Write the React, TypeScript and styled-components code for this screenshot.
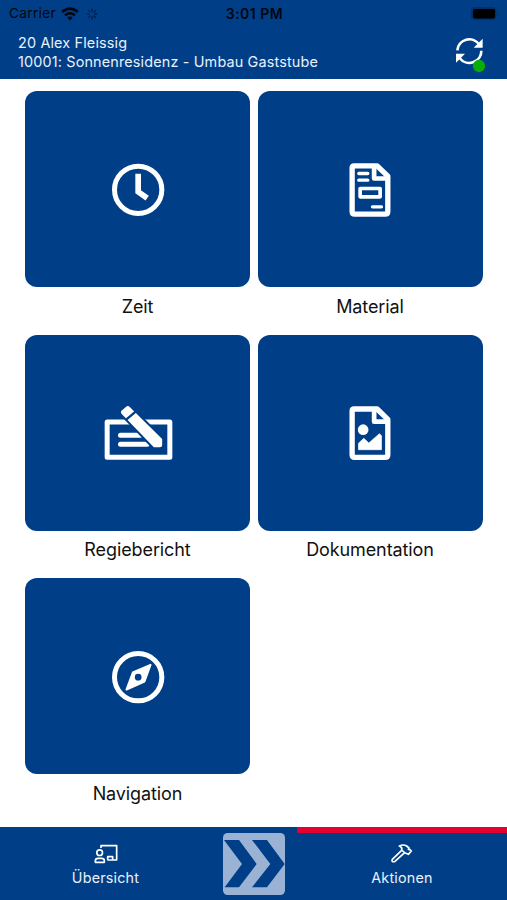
import React from "react";
import styled, { createGlobalStyle } from "styled-components";

const BLUE = "#003f88";

const GlobalStyle = createGlobalStyle`
  *, *::before, *::after { box-sizing: border-box; }
  body { margin: 0; background: #fff; }
`;

const Screen = styled.div`
  width: 507px;
  height: 900px;
  display: flex;
  flex-direction: column;
  background: #fff;
  font-family: Inter, "Liberation Sans", sans-serif;
  overflow: hidden;
`;

const Header = styled.header`
  height: 79px;
  flex: none;
  background: ${BLUE};
`;

const StatusBar = styled.div`
  height: 27px;
  padding: 0 7px 0 9px;
  display: grid;
  grid-template-columns: 1fr auto 1fr;
  align-items: center;
  color: #00060f;
`;

const Carrier = styled.div`
  display: flex;
  align-items: center;
  font-size: 13.7px;
  line-height: 27px;
  letter-spacing: 0.3px;
  svg { display: block; }
`;

const WifiIcon = styled.svg`
  margin-left: 5.5px;
`;

const SpinnerIcon = styled.svg`
  margin-left: 7px;
`;

const Clock = styled.div`
  font-size: 14px;
  font-weight: 600;
  line-height: 27px;
  letter-spacing: 0.5px;
`;

const BatteryIcon = styled.svg`
  display: block;
  justify-self: end;
`;

const TitleBar = styled.div`
  display: flex;
  justify-content: space-between;
  padding: 7px 19px 0 18px;
`;

const Title = styled.div`
  color: #e9f1fc;
  font-size: 14.4px;
  line-height: 18.5px;
  white-space: nowrap;
  letter-spacing: 0.16px;
`;

const TitleLine = styled.div``;

const SyncIcon = styled.svg`
  display: block;
  margin-top: 1px;
`;

const Grid = styled.main`
  flex: 1;
  padding: 12.3px 24.5px 0 25px;
  display: grid;
  grid-template-columns: 1fr 1fr;
  grid-auto-rows: 243.5px;
  column-gap: 7.5px;
`;

const Cell = styled.div`
  display: flex;
  flex-direction: column;
  align-items: center;
`;

const Tile = styled.div`
  width: 100%;
  height: 196px;
  border-radius: 12px;
  background: ${BLUE};
  display: flex;
  align-items: center;
  justify-content: center;
  padding-top: 0.8px;
  svg { display: block; }
`;

const Label = styled.div`
  margin-top: 7.5px;
  font-size: 18px;
  line-height: 24px;
  letter-spacing: -0.1px;
  color: #111;
`;

const Footer = styled.footer`
  height: 73px;
  flex: none;
  background: ${BLUE};
  display: grid;
  grid-template-columns: 211px 86px 210px;
`;

const Tab = styled.div<{ $active?: boolean }>`
  border-top: 6px solid ${(p) => (p.$active ? "#e4002f" : "transparent")};
  display: flex;
  flex-direction: column;
  align-items: center;
  padding-top: 8px;
  svg { display: block; }
`;

const TabLabel = styled.div`
  margin-top: 2px;
  font-size: 14.3px;
  line-height: 18px;
  letter-spacing: 0.22px;
  color: #e9f1fc;
`;

const Logo = styled.div`
  display: flex;
  justify-content: center;
  padding-top: 6px;
  svg { display: block; }
`;

const ClockDrawing = () => (
  <svg width="80" height="80" viewBox="-7.5 -1.5 240 240" fill="none" stroke="#fff">
    <circle cx="113" cy="118" r="71" strokeWidth="15" />
    <path d="M113 70V124L140 143" strokeWidth="17" />
  </svg>
);

const MaterialDrawing = () => (
  <svg width="80" height="80" viewBox="0.6 -1.5 240 240" fill="none" stroke="#fff" strokeLinejoin="round">
    <path d="M73 46H142L174 77V183Q174 191 166 191H75Q67 191 67 183V52Q67 46 73 46Z" strokeWidth="16" />
    <path d="M133 46V84H172" strokeWidth="14" />
    <path d="M87 69H114M87 89H114M128 169H155" strokeWidth="10" strokeLinecap="round" />
    <path d="M91 114H151V139H91Z" strokeWidth="11" />
  </svg>
);

const ReportDrawing = () => (
  <svg width="100" height="80" viewBox="-7.5 -6 300 240" fill="none" stroke="#fff" strokeLinejoin="round">
    <rect x="50" y="81" width="188" height="106" strokeWidth="15" />
    <path d="M90 121H150M90 148H170" strokeWidth="15" strokeLinecap="round" />
    <path
      d="M92 48L109 34Q113 31 117 35L215 132V150Q215 157 208 157H190L93 56Q90 52 92 48Z"
      fill="#fff"
      stroke={BLUE}
      strokeWidth="12"
      paintOrder="stroke"
    />
    <path d="M107 74L139 47" stroke={BLUE} strokeWidth="7" />
  </svg>
);

const DocumentDrawing = () => (
  <svg width="80" height="80" viewBox="0.6 -6 240 240" fill="none" stroke="#fff" strokeLinejoin="round">
    <path d="M73 42H142L174 73V179Q174 187 166 187H75Q67 187 67 179V48Q67 42 73 42Z" strokeWidth="16" />
    <path d="M133 42V80H172" strokeWidth="14" />
    <circle cx="100" cy="104" r="16" fill="#fff" stroke="none" />
    <path d="M86 164V145L102 130L117 144L149 116L155 122V164Z" fill="#fff" strokeWidth="2" />
  </svg>
);

const CompassDrawing = () => (
  <svg width="80" height="80" viewBox="-7.5 4.5 240 240" fill="none" stroke="#fff">
    <circle cx="113" cy="125" r="71" strokeWidth="15" />
    <path
      fillRule="evenodd"
      d="M150 88L132 138L78 162L97 111ZM113 112A13 13 0 1 0 113 138A13 13 0 1 0 113 112Z"
      fill="#fff"
      strokeWidth="6"
      strokeLinejoin="round"
    />
  </svg>
);

const tiles = [
  { label: "Zeit", Drawing: ClockDrawing },
  { label: "Material", Drawing: MaterialDrawing },
  { label: "Regiebericht", Drawing: ReportDrawing },
  { label: "Dokumentation", Drawing: DocumentDrawing },
  { label: "Navigation", Drawing: CompassDrawing },
];

const spokes = [0, 45, 90, 135, 180, 225, 270, 315];

export default function App() {
  return (
    <>
      <GlobalStyle />
      <Screen>
        <Header>
          <StatusBar>
            <Carrier>
              Carrier
              <WifiIcon width="18" height="14" viewBox="0 0 18 14" fill="none" stroke="#00060f">
                <path d="M1.2 5.1Q9 -1.7 16.8 5.1" strokeWidth="2.6" />
                <path d="M4 8.3Q9 4 14 8.3" strokeWidth="2.4" />
                <path d="M9 13.4L6.2 10.5Q9 8.3 11.8 10.5Z" fill="#00060f" stroke="none" />
              </WifiIcon>
              <SpinnerIcon width="12" height="12" viewBox="-6 -6 12 12" stroke="#00193c" strokeLinecap="round">
                {spokes.map((angle, i) => (
                  <path key={angle} d="M0 -2.9V-4.8" strokeWidth="1.3" opacity={i > 4 ? 0.6 : 1} transform={`rotate(${angle})`} />
                ))}
              </SpinnerIcon>
            </Carrier>
            <Clock>3:01 PM</Clock>
            <BatteryIcon width="30" height="15" viewBox="0 0 30 15">
              <rect x="1" y="1" width="25.5" height="13" rx="4" fill="#003068" />
              <rect x="3" y="3" width="22" height="9.5" rx="2" fill="#000" />
              <path d="M28 5.5Q30 7.5 28 9.5Z" fill="#003068" />
            </BatteryIcon>
          </StatusBar>
          <TitleBar>
            <Title>
              <TitleLine>20 Alex Fleissig</TitleLine>
              <TitleLine>10001: Sonnenresidenz - Umbau Gaststube</TitleLine>
            </Title>
            <SyncIcon width="35" height="40" viewBox="369 105 105 120" fill="none" stroke="#fff">
              <path d="M382 151A36 36 0 0 1 447 133M454 152A36 36 0 0 1 389 174" strokeWidth="8" />
              <path d="M458 116V143H431ZM378 188V161H405Z" fill="#fff" stroke="none" />
              <circle cx="447" cy="198" r="18.5" fill="#08ad08" stroke="none" />
            </SyncIcon>
          </TitleBar>
        </Header>
        <Grid>
          {tiles.map(({ label, Drawing }) => (
            <Cell key={label}>
              <Tile>
                <Drawing />
              </Tile>
              <Label>{label}</Label>
            </Cell>
          ))}
        </Grid>
        <Footer>
          <Tab>
            <svg width="26" height="26" viewBox="279 211 78 78" fill="none" stroke="#fff" strokeWidth="5" strokeLinejoin="round">
              <path d="M303 232V225H350V268H322" />
              <circle cx="299" cy="246" r="8.5" />
              <path d="M286 275V270Q286 263 294 263H305Q313 263 313 270V275Z" />
              <path d="M323 267V258H338V267" />
            </svg>
            <TabLabel>Übersicht</TabLabel>
          </Tab>
          <Logo>
            <svg width="62" height="62" viewBox="39 53 186 186">
              <rect x="39" y="53" width="186" height="186" rx="14" fill="#9ab3d4" />
              <path d="M42 74H87L140 146L87 216H44L96 146ZM126 74H171L224 146L171 216H126L181 146Z" fill={BLUE} />
            </svg>
          </Logo>
          <Tab $active>
            <svg width="26" height="26" viewBox="537 76 78 78" fill="none" stroke="#fff" strokeWidth="5" strokeLinejoin="round">
              <path d="M575 104L547 131Q543 140 554 138L584 111" />
              <path d="M568 91Q580 85 590 91L597 97L595 101L600 102L604 106L595 116L584 111L575 103Q578 95 568 91Z" />
            </svg>
            <TabLabel>Aktionen</TabLabel>
          </Tab>
        </Footer>
      </Screen>
    </>
  );
}
